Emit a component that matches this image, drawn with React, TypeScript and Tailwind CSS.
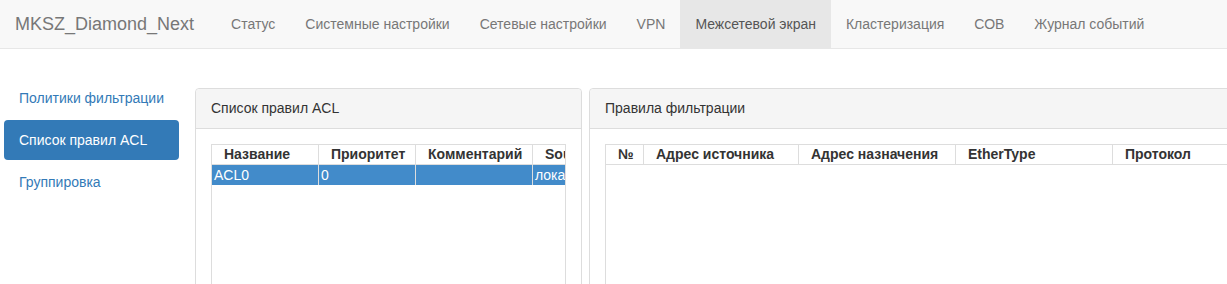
const navItems = [
  "Статус",
  "Системные настройки",
  "Сетевые настройки",
  "VPN",
  "Межсетевой экран",
  "Кластеризация",
  "СОВ",
  "Журнал событий",
];

const sideItems = ["Политики фильтрации", "Список правил ACL", "Группировка"];

const aclCols = [
  { title: "Название", w: "w-[106px]" },
  { title: "Приоритет", w: "w-[97px]" },
  { title: "Комментарий", w: "w-[117px]" },
  { title: "Source", w: "w-[90px]" },
];

const aclRow = ["ACL0", "0", "", "локальный"];

const filterCols = [
  { title: "№", w: "w-[37px]" },
  { title: "Адрес источника", w: "w-[155px]" },
  { title: "Адрес назначения", w: "w-[157px]" },
  { title: "EtherType", w: "w-[157px]" },
  { title: "Протокол", w: "w-[157px]" },
];

const Panel = ({
  title,
  className,
  children,
}: {
  title: string;
  className: string;
  children: React.ReactNode;
}) => (
  <div className={`shrink-0 h-[400px] border border-[#ddd] rounded bg-white ${className}`}>
    <div className="h-[40px] px-[15px] flex items-center bg-[#f5f5f5] border-b border-[#ddd] rounded-t text-[14px] text-[#333]">
      {title}
    </div>
    <div className="p-[15px]">{children}</div>
  </div>
);

export default function App() {
  return (
    <div
      className="w-[1227px] h-[284px] overflow-hidden bg-white text-[14px]"
      style={{ fontFamily: '"Liberation Sans", Arial, sans-serif' }}
    >
      <nav className="h-[49px] flex bg-[#f8f8f8] border-b border-[#e7e7e7]">
        <div className="pl-[15px] pr-[22px] flex items-center text-[18px] text-[#777]">
          MKSZ_Diamond_Next
        </div>
        <ul className="flex">
          {navItems.map((item) => (
            <li
              key={item}
              className={`px-[15px] flex items-center text-[14px] ${
                item === "Межсетевой экран" ? "bg-[#e7e7e7] text-[#555]" : "text-[#777]"
              }`}
            >
              {item}
            </li>
          ))}
        </ul>
      </nav>

      <div className="flex pl-[4px]">
        <ul className="w-[175px] shrink-0 pt-[29px] flex flex-col gap-[2px]">
          {sideItems.map((item) => (
            <li
              key={item}
              className={`h-[40px] px-[15px] flex items-center rounded ${
                item === "Список правил ACL" ? "bg-[#337ab7] text-white" : "text-[#337ab7]"
              }`}
            >
              {item}
            </li>
          ))}
        </ul>

        <div className="flex gap-[7px] pt-[39px] ml-[16px]">
          <Panel title="Список правил ACL" className="w-[387px]">
            <div className="h-[300px] border border-[#ddd] overflow-hidden">
              <div className="flex w-max h-[20px] border-b border-[#ddd] font-bold text-[#333] leading-[19px]">
                {aclCols.map((c, i) => (
                  <div
                    key={c.title}
                    className={`${c.w} shrink-0 pl-[12px] ${i > 0 ? "border-l border-[#ddd]" : ""}`}
                  >
                    {c.title}
                  </div>
                ))}
              </div>
              <div className="flex w-max h-[20px] bg-[#428bca] text-white leading-[20px]">
                {aclCols.map((c, i) => (
                  <div
                    key={c.title}
                    className={`${c.w} shrink-0 pl-[2px] ${i > 0 ? "border-l border-[#ddd]" : ""}`}
                  >
                    {aclRow[i]}
                  </div>
                ))}
              </div>
            </div>
          </Panel>

          <Panel title="Правила фильтрации" className="w-[700px]">
            <div className="h-[300px] border border-[#ddd] border-r-0 overflow-hidden">
              <div className="flex w-max h-[20px] border-b border-[#ddd] font-bold text-[#333] leading-[19px]">
                {filterCols.map((c, i) => (
                  <div
                    key={c.title}
                    className={`${c.w} shrink-0 pl-[12px] ${i > 0 ? "border-l border-[#ddd]" : ""}`}
                  >
                    {c.title}
                  </div>
                ))}
              </div>
            </div>
          </Panel>
        </div>
      </div>
    </div>
  );
}
